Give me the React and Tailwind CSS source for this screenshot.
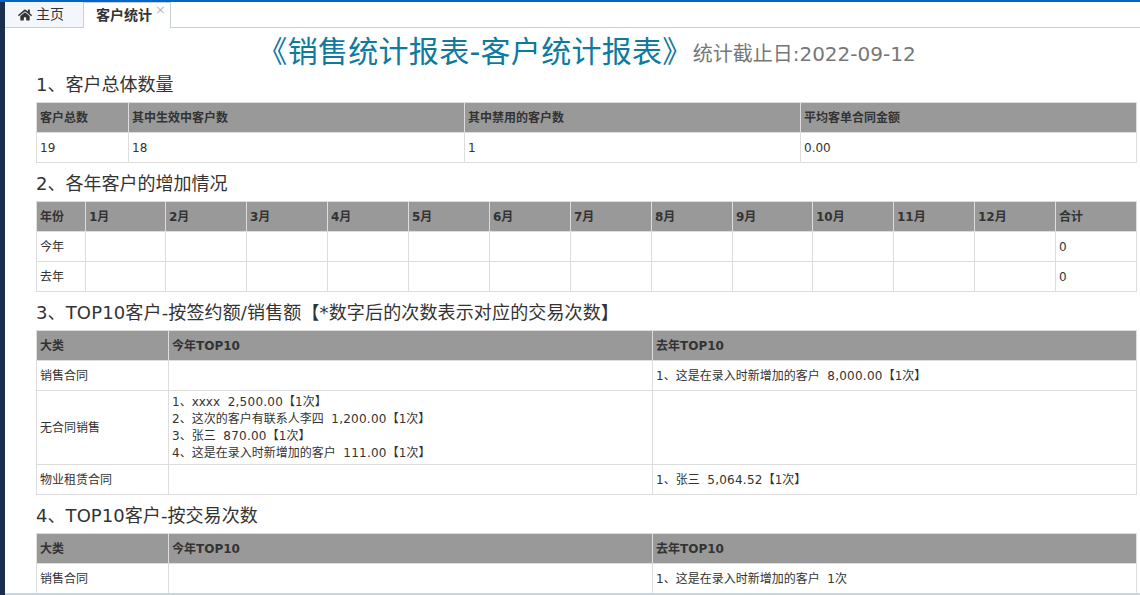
import React from "react";
import { FaHome } from "react-icons/fa";

const months = ["1月", "2月", "3月", "4月", "5月", "6月", "7月", "8月", "9月", "10月", "11月", "12月"];

// Header cells are grey with a light divider, body cells have the thin border
const Th = ({ children }) => (
  <th className="h-[30px] border border-[#ddd] bg-[#999] px-[3px] text-left align-middle text-[12px] font-bold text-[#333]">
    {children}
  </th>
);

const Td = ({ children, className = "" }) => (
  <td className={`h-[30px] border border-[#ddd] px-[3px] align-middle text-[12px] text-[#333] ${className}`}>
    {children}
  </td>
);

const Heading = ({ children, className = "" }) => (
  <h3 className={`h-[38px] pt-[8px] text-[18px] leading-[26px] font-normal text-[#333] ${className}`}>
    {children}
  </h3>
);

// Amounts run a touch wider in the picture
const Amt = ({ children }) => <span className="tracking-[0.25px]">{children}</span>;

const Table = ({ widths, children }) => (
  <table className="w-[1100px] table-fixed border-collapse">
    <colgroup>
      {widths.map((w, i) => (
        <col key={i} style={{ width: w }} />
      ))}
    </colgroup>
    {children}
  </table>
);

const App = () => {
  return (
    <div
      className="flex h-[595px] w-[1140px] flex-col overflow-hidden bg-white"
      style={{ fontFamily: '"DejaVu Sans", "Noto Sans CJK SC", sans-serif' }}
    >
      {/* top blue line */}
      <div className="h-[2px] shrink-0 bg-[#0066cc]" />
      <div className="flex min-h-0 flex-1">
        {/* dark sidebar edge */}
        <div className="w-[5px] shrink-0 bg-[#1a2f50]" />
        <div className="flex min-w-0 flex-1 flex-col">
          {/* tab bar */}
          <div className="flex h-[26px] shrink-0 border-b border-[#c5d0da]">
            <div className="flex h-[25px] w-[78px] items-center gap-[4px] bg-[#f3f7fb] pl-[13px] text-[14px] text-[#333]">
              <FaHome className="text-[14px]" />
              <span>主页</span>
            </div>
            <div className="relative flex h-[26px] w-[88px] items-center border-x border-t border-[#c5d0da] bg-white pl-[12px] text-[14px] font-bold text-[#333]">
              客户统计
              <span className="absolute top-[1px] right-[4px] text-[13px] leading-[12px] font-normal text-[#bbb]">×</span>
            </div>
          </div>

          {/* report body */}
          <div className="min-h-0 flex-1 overflow-hidden border-b-2 border-[#c8d6df] pl-[31px]">
            <div className="flex h-[48px] items-center justify-center pr-[3px]">
              <span className="text-[30px] leading-[44px] tracking-[0.3px] text-[#0e7a9e]">《销售统计报表-客户统计报表》</span>
              <span className="pt-[3px] text-[20px] leading-[28px] text-[#777]">统计截止日:2022-09-12</span>
            </div>

            <div className="-mt-[12px]">
              <Heading>1、客户总体数量</Heading>
            </div>
            <Table widths={[92, 336, 336, 336]}>
              <thead>
                <tr>
                  <Th>客户总数</Th>
                  <Th>其中生效中客户数</Th>
                  <Th>其中禁用的客户数</Th>
                  <Th>平均客单合同金额</Th>
                </tr>
              </thead>
              <tbody>
                <tr>
                  <Td>19</Td>
                  <Td>18</Td>
                  <Td>1</Td>
                  <Td>0.00</Td>
                </tr>
              </tbody>
            </Table>

            <Heading>2、各年客户的增加情况</Heading>
            <Table widths={[49, 80, 81, 81, 81, 81, 81, 81, 81, 80, 81, 81, 81, 81]}>
              <thead>
                <tr>
                  <Th>年份</Th>
                  {months.map((m) => (
                    <Th key={m}>{m}</Th>
                  ))}
                  <Th>合计</Th>
                </tr>
              </thead>
              <tbody>
                {["今年", "去年"].map((year) => (
                  <tr key={year}>
                    <Td>{year}</Td>
                    {months.map((m) => (
                      <Td key={m} />
                    ))}
                    <Td>0</Td>
                  </tr>
                ))}
              </tbody>
            </Table>

            <Heading className="tracking-[0.14px]">3、TOP10客户-按签约额/销售额【*数字后的次数表示对应的交易次数】</Heading>
            <Table widths={[132, 484, 484]}>
              <thead>
                <tr>
                  <Th>大类</Th>
                  <Th>今年TOP10</Th>
                  <Th>去年TOP10</Th>
                </tr>
              </thead>
              <tbody>
                <tr>
                  <Td>销售合同</Td>
                  <Td />
                  <Td>1、这是在录入时新增加的客户&nbsp;&nbsp;<Amt>8,000.00</Amt>【1次】</Td>
                </tr>
                <tr>
                  <Td>无合同销售</Td>
                  <Td className="pt-[3px] pb-[2px] leading-[17px]">
                    1、xxxx&nbsp;&nbsp;<Amt>2,500.00</Amt>【1次】
                    <br />
                    2、这次的客户有联系人李四&nbsp;&nbsp;<Amt>1,200.00</Amt>【1次】
                    <br />
                    3、张三&nbsp;&nbsp;<Amt>870.00</Amt>【1次】
                    <br />
                    4、这是在录入时新增加的客户&nbsp;&nbsp;<Amt>111.00</Amt>【1次】
                  </Td>
                  <Td />
                </tr>
                <tr>
                  <Td>物业租赁合同</Td>
                  <Td />
                  <Td>1、张三&nbsp;&nbsp;<Amt>5,064.52</Amt>【1次】</Td>
                </tr>
              </tbody>
            </Table>

            <Heading className="tracking-[0.06px]">4、TOP10客户-按交易次数</Heading>
            <Table widths={[132, 484, 484]}>
              <thead>
                <tr>
                  <Th>大类</Th>
                  <Th>今年TOP10</Th>
                  <Th>去年TOP10</Th>
                </tr>
              </thead>
              <tbody>
                <tr>
                  <Td>销售合同</Td>
                  <Td />
                  <Td>1、这是在录入时新增加的客户&nbsp;&nbsp;1次</Td>
                </tr>
              </tbody>
            </Table>
          </div>
        </div>
      </div>
    </div>
  );
};

export default App;
